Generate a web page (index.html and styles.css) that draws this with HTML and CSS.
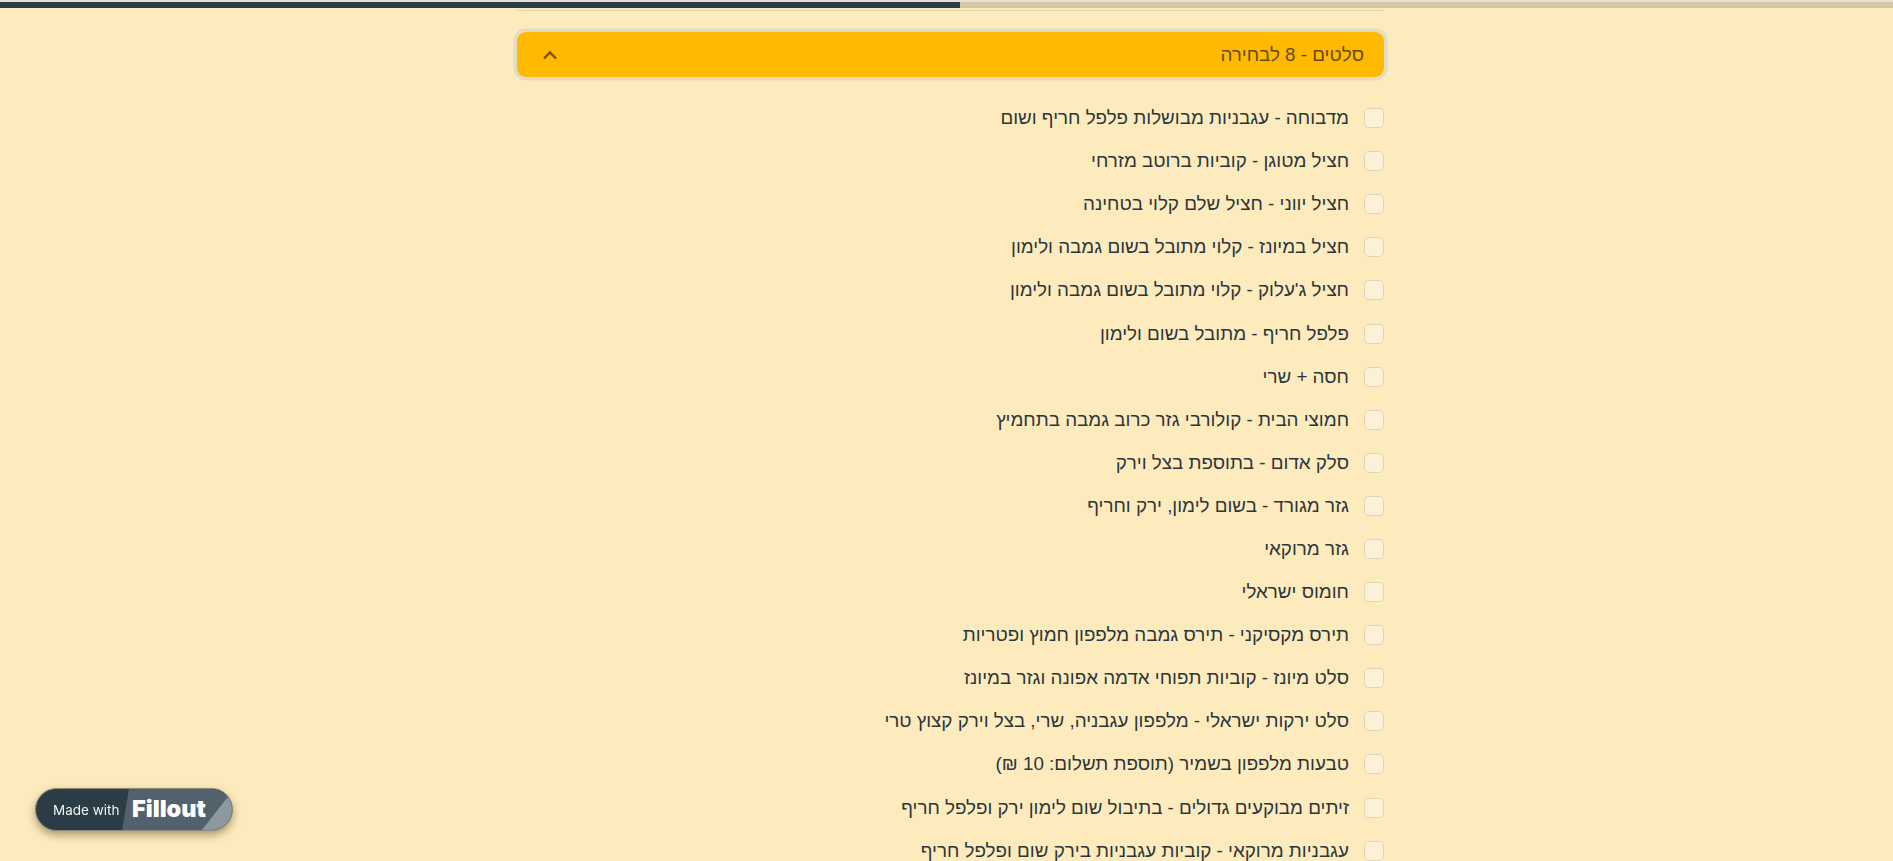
FILE: index.html
```html
<!DOCTYPE html>
<html lang="he" dir="rtl">
<head>
<meta charset="utf-8">
<title>סלטים</title>
<link rel="stylesheet" href="styles.css">
</head>
<body>
<div class="progress"><div class="progress-fill"></div></div>
<main class="form">
  <hr class="rule">
  <div class="accordion-head">
    <span class="accordion-title">סלטים - 8 לבחירה</span>
    <svg class="chevron" width="16" height="16" viewBox="0 0 16 16" aria-hidden="true"><path d="M2 11.500 8 5.500l6 6" fill="none" stroke="currentColor" stroke-width="2.400"/></svg>
  </div>
  <ul class="options">
    <li class="option"><span class="box"></span><span>מדבוחה - עגבניות מבושלות פלפל חריף ושום</span></li>
    <li class="option"><span class="box"></span><span>חציל מטוגן - קוביות ברוטב מזרחי</span></li>
    <li class="option"><span class="box"></span><span>חציל יווני - חציל שלם קלוי בטחינה</span></li>
    <li class="option"><span class="box"></span><span>חציל במיונז - קלוי מתובל בשום גמבה ולימון</span></li>
    <li class="option"><span class="box"></span><span>חציל ג'עלוק - קלוי מתובל בשום גמבה ולימון</span></li>
    <li class="option"><span class="box"></span><span>פלפל חריף - מתובל בשום ולימון</span></li>
    <li class="option"><span class="box"></span><span>חסה + שרי</span></li>
    <li class="option"><span class="box"></span><span>חמוצי הבית - קולורבי גזר כרוב גמבה בתחמיץ</span></li>
    <li class="option"><span class="box"></span><span>סלק אדום - בתוספת בצל וירק</span></li>
    <li class="option"><span class="box"></span><span>גזר מגורד - בשום לימון, ירק וחריף</span></li>
    <li class="option"><span class="box"></span><span>גזר מרוקאי</span></li>
    <li class="option"><span class="box"></span><span>חומוס ישראלי</span></li>
    <li class="option"><span class="box"></span><span>תירס מקסיקני - תירס גמבה מלפפון חמוץ ופטריות</span></li>
    <li class="option"><span class="box"></span><span>סלט מיונז - קוביות תפוחי אדמה אפונה וגזר במיונז</span></li>
    <li class="option"><span class="box"></span><span>סלט ירקות ישראלי - מלפפון עגבניה, שרי, בצל וירק קצוץ טרי</span></li>
    <li class="option"><span class="box"></span><span>טבעות מלפפון בשמיר (תוספת תשלום: 10 ₪)</span></li>
    <li class="option"><span class="box"></span><span>זיתים מבוקעים גדולים - בתיבול שום לימון ירק ופלפל חריף</span></li>
    <li class="option"><span class="box"></span><span>עגבניות מרוקאי - קוביות עגבניות בירק שום ופלפל חריף</span></li>
  </ul>
</main>
<a class="badge" dir="ltr">
  <span class="badge-made">Made with</span>
  <span class="badge-brand"><span class="badge-name">Fillout</span></span>
  <span class="badge-corner"></span>
</a>
</body>
</html>
```
FILE: styles.css
```css
* { box-sizing: border-box; }
html, body { height: 100%; }
body {
  margin: 0;
  height: 861px;
  overflow: hidden;
  background: #fdebbd;
  color: #2b363c;
  font-family: "Liberation Sans", "Noto Sans", sans-serif;
}
.progress {
  height: 8px;
  border-top: 2px solid #e4e2d8;
  background: #d4c7a3;
  direction: ltr;
}
.progress-fill {
  width: 960px;
  height: 100%;
  background: #2b3c46;
}
.form {
  margin-inline: 509px 517px;
}
.rule {
  margin: 2px 0 0;
  border: 0;
  border-top: 1px solid #e0d2a9;
}
.accordion-head {
  margin-top: 21px;
  height: 45px;
  padding: 0 20px;
  display: flex;
  align-items: center;
  justify-content: space-between;
  background: #ffb900;
  border-radius: 9px;
  box-shadow: 0 0 0 3.500px #e3dcc4;
  color: #654c10;
  font-size: 18.800px;
}
.chevron { color: #7a5200; margin-left: 5px; }
.options {
  list-style: none;
  margin: 19.500px 0 0;
  padding: 0;
}
.option {
  height: 43.100px;
  display: flex;
  align-items: center;
  gap: 15px;
  font-size: 18.800px;
}
.box {
  flex: none;
  width: 20px;
  height: 20px;
  border: 1px solid #e0d5b6;
  border-radius: 5px;
  background: #fcf1d6;
}
.badge {
  position: fixed;
  left: 35px;
  top: 788px;
  width: 198px;
  height: 43px;
  display: flex;
  align-items: center;
  overflow: hidden;
  border-radius: 22px;
  border: 1px solid #8a8a7c;
  background: #2b3c46;
  box-shadow: 0 4px 8px rgba(60, 50, 20, .45);
  color: #eef1f2;
  font-family: Inter, sans-serif;
}
.badge-made {
  width: 86px;
  flex: none;
  padding-left: 17px;
  font-size: 13.500px;
  white-space: nowrap;
}
.badge-brand {
  flex: 1;
  align-self: stretch;
  display: flex;
  align-items: center;
  padding-left: 10px;
  background: #52616b;
  clip-path: polygon(7px 0, 100% 0, 100% 100%, 0 100%);
  font-size: 23.500px;
  font-weight: 900;
  color: #fff;
}
.badge-name { position: relative; top: -1px; }
.badge-corner {
  position: absolute;
  right: 0;
  top: 0;
  width: 30px;
  height: 100%;
  background: #8d989f;
  clip-path: polygon(100% 20%, 100% 100%, 0 100%, 85% 20%);
}
```
